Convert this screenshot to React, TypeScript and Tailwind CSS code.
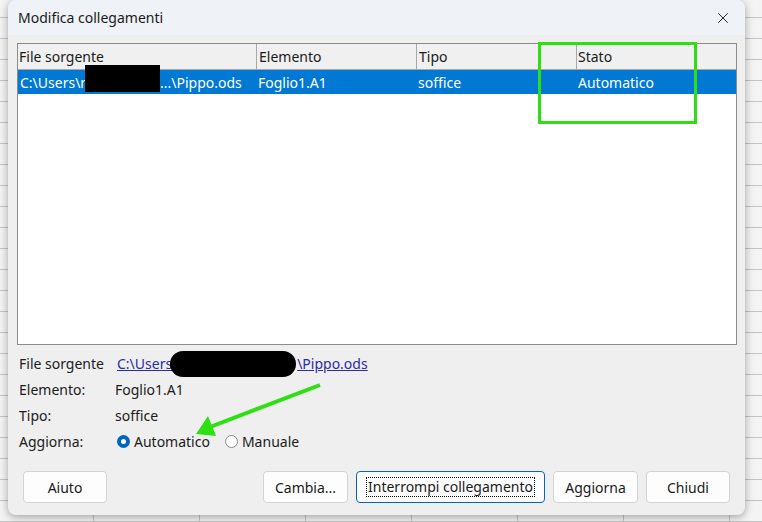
import { X } from 'lucide-react';

const font = { fontFamily: '"Noto Sans", "Open Sans", sans-serif' };

function Radio({ checked, label }: { checked?: boolean; label: string }) {
  return (
    <label className="flex items-center gap-[4px]">
      {checked ? (
        <span className="w-[13px] h-[13px] rounded-full border-[4px] border-[#0067c0] bg-white" />
      ) : (
        <span className="w-[13px] h-[13px] rounded-full border border-[#8a8a8a] bg-white" />
      )}
      <span>{label}</span>
    </label>
  );
}

function Button({ children, focused, width }: { children: React.ReactNode; focused?: boolean; width: string }) {
  return (
    <button
      className={`h-[32px] ${width} rounded-[4px] bg-[#fdfdfd] text-[14px] text-[#1a1a1a] flex items-center justify-center ${
        focused ? 'border border-[#0067c0]' : 'border border-[#d3d3d3]'
      }`}
    >
      {focused ? (
        <span className="border border-dotted border-black px-[1px] leading-[18px]">{children}</span>
      ) : (
        children
      )}
    </button>
  );
}

export default function App() {
  return (
    <div
      className="w-[762px] h-[522px] overflow-hidden bg-[#f4f4f4] bg-[linear-gradient(#c4c4c4_1px,transparent_1px),linear-gradient(90deg,#c4c4c4_1px,transparent_1px)] bg-[size:106px_21px] bg-[position:-13px_17px] pl-[8px] relative"
      style={font}
    >
      {/* dialog */}
      <div className="w-[737px] h-[515px] bg-[#efefef] rounded-[8px] shadow-[0_2px_8px_rgba(0,0,0,0.35)] flex flex-col overflow-hidden text-[14px] text-[#1b1b1b]">
        {/* title bar */}
        <div className="h-[35px] shrink-0 bg-[#eff2f6] flex items-center justify-between pl-[10px] pr-[13px]">
          <span className="text-[14px] text-[#1a1a1a]">Modifica collegamenti</span>
          <X size={18} strokeWidth={1.3} className="text-[#222]" />
        </div>

        {/* table */}
        <div className="mt-[8px] ml-[9px] mr-[8px] h-[302px] border border-[#8c8c8c] bg-white flex flex-col">
          <div className="h-[26px] flex bg-[#f0f0f0] border-b border-[#a8a8a8] text-[#1b1b1b]">
            <div className="w-[238px] pl-[1px] flex items-center">File sorgente</div>
            <div className="w-[160px] border-l border-[#a8a8a8] pl-[2px] flex items-center">Elemento</div>
            <div className="w-[160px] border-l border-[#a8a8a8] pl-[2px] flex items-center">Tipo</div>
            <div className="flex-1 border-l border-[#a8a8a8] pl-[1px] flex items-center">Stato</div>
          </div>
          <div className="h-[24px] flex bg-[#0078d4] text-white">
            <div className="w-[238px] pl-[2px] flex items-center relative">
              <span>C:\Users\n</span>
              <span className="inline-block w-[71px]" />
              <span>...\Pippo.ods</span>
              <span className="absolute left-[67px] top-[-5px] w-[75px] h-[27px] bg-black" />
            </div>
            <div className="w-[160px] pl-[2px] flex items-center">Foglio1.A1</div>
            <div className="w-[160px] pl-[2px] flex items-center">soffice</div>
            <div className="flex-1 pl-[2px] flex items-center">Automatico</div>
          </div>
        </div>

        {/* details */}
        <div className="ml-[11px] mt-[5px] flex flex-col">
          <div className="h-[26px] flex items-center">
            <span className="w-[98px]">File sorgente</span>
            <span className="relative flex text-[#2b2ba6] underline">
              <span>C:\Users</span>
              <span className="inline-block w-[125px]" />
              <span>\Pippo.ods</span>
              <span className="absolute left-[53px] top-[-2px] w-[126px] h-[26px] rounded-full bg-black" />
            </span>
          </div>
          <div className="h-[26px] flex items-center">
            <span className="w-[96px]">Elemento:</span>
            <span>Foglio1.A1</span>
          </div>
          <div className="h-[26px] flex items-center">
            <span className="w-[96px]">Tipo:</span>
            <span>soffice</span>
          </div>
          <div className="h-[26px] flex items-center">
            <span className="w-[98px]">Aggiorna:</span>
            <div className="flex items-center gap-[15px]">
              <Radio checked label="Automatico" />
              <Radio label="Manuale" />
            </div>
          </div>
        </div>

        {/* buttons */}
        <div className="mt-auto mb-[12px] mx-[15px] flex items-center">
          <Button width="w-[84px]">Aiuto</Button>
          <div className="ml-auto flex gap-[8px]">
            <Button width="w-[85px]">Cambia...</Button>
            <Button width="w-[189px]" focused>
              Interrompi collegamento
            </Button>
            <Button width="w-[85px]">Aggiorna</Button>
            <Button width="w-[84px]">Chiudi</Button>
          </div>
        </div>
      </div>

      {/* annotations */}
      <div className="absolute left-[538px] top-[42px] w-[159px] h-[82px] border-[3px] border-[#2ee012]" />
      <svg className="absolute left-0 top-0" width="762" height="522" viewBox="0 0 762 522">
        <line x1="320" y1="385" x2="210" y2="427" stroke="#2ee012" strokeWidth="4" />
        <polygon points="196,434 208,416 216,436" fill="#2ee012" />
      </svg>
    </div>
  );
}
